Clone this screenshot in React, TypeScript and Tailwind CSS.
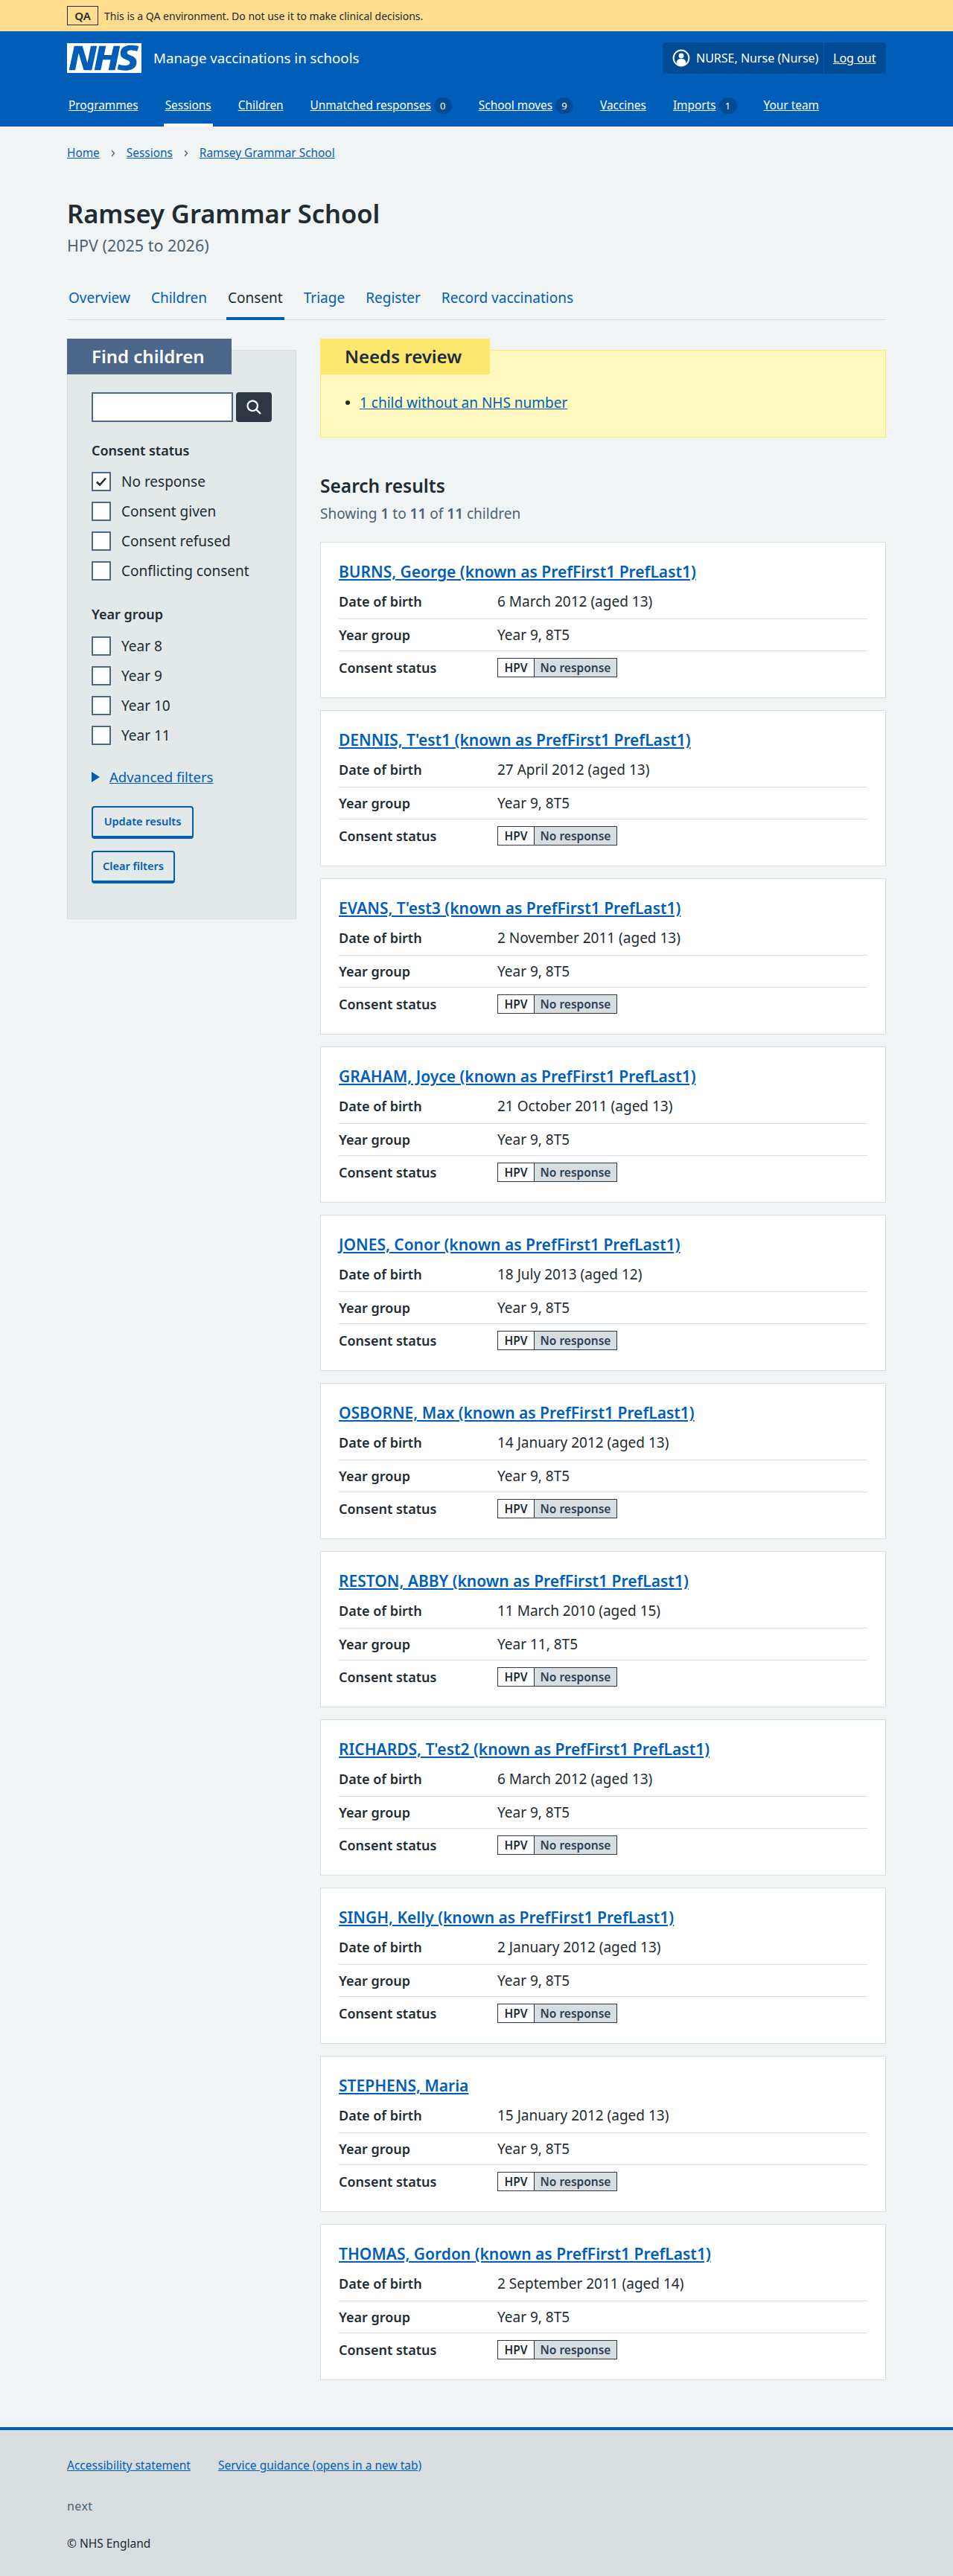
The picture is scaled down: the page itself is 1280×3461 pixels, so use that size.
const navItems: { label: string; count?: number; active?: boolean }[] = [
  { label: "Programmes" },
  { label: "Sessions", active: true },
  { label: "Children" },
  { label: "Unmatched responses", count: 0 },
  { label: "School moves", count: 9 },
  { label: "Vaccines" },
  { label: "Imports", count: 1 },
  { label: "Your team" },
];

const tabs = ["Overview", "Children", "Consent", "Triage", "Register", "Record vaccinations"];

const children = [
  { name: "BURNS, George (known as PrefFirst1 PrefLast1)", dob: "6 March 2012 (aged 13)", year: "Year 9, 8T5" },
  { name: "DENNIS, T'est1 (known as PrefFirst1 PrefLast1)", dob: "27 April 2012 (aged 13)", year: "Year 9, 8T5" },
  { name: "EVANS, T'est3 (known as PrefFirst1 PrefLast1)", dob: "2 November 2011 (aged 13)", year: "Year 9, 8T5" },
  { name: "GRAHAM, Joyce (known as PrefFirst1 PrefLast1)", dob: "21 October 2011 (aged 13)", year: "Year 9, 8T5" },
  { name: "JONES, Conor (known as PrefFirst1 PrefLast1)", dob: "18 July 2013 (aged 12)", year: "Year 9, 8T5" },
  { name: "OSBORNE, Max (known as PrefFirst1 PrefLast1)", dob: "14 January 2012 (aged 13)", year: "Year 9, 8T5" },
  { name: "RESTON, ABBY (known as PrefFirst1 PrefLast1)", dob: "11 March 2010 (aged 15)", year: "Year 11, 8T5" },
  { name: "RICHARDS, T'est2 (known as PrefFirst1 PrefLast1)", dob: "6 March 2012 (aged 13)", year: "Year 9, 8T5" },
  { name: "SINGH, Kelly (known as PrefFirst1 PrefLast1)", dob: "2 January 2012 (aged 13)", year: "Year 9, 8T5" },
  { name: "STEPHENS, Maria", dob: "15 January 2012 (aged 13)", year: "Year 9, 8T5" },
  { name: "THOMAS, Gordon (known as PrefFirst1 PrefLast1)", dob: "2 September 2011 (aged 14)", year: "Year 9, 8T5" },
];

function Checkbox({ label, checked }: { label: string; checked?: boolean }) {
  return (
    <div className="flex h-[26px] items-center">
      <span className="flex size-[26px] items-center justify-center border-2 border-[#4c6789] bg-white">
        {checked && (
          <svg viewBox="0 0 14 12" className="h-[12px] w-[14px]" fill="none" stroke="#212b32" strokeWidth="2.6">
            <path d="M1 6.5 5 10.500 13 1.500" />
          </svg>
        )}
      </span>
      <span className="ml-[14px] text-[19px] leading-[24px] text-[#212b32]">{label}</span>
    </div>
  );
}

function Chevron() {
  return (
    <svg viewBox="0 0 8 12" className="mx-[15px] h-[10px] w-[6px]" fill="none" stroke="#4c6272" strokeWidth="1.8">
      <path d="M1.5 1 6 6l-4.5 5" />
    </svg>
  );
}

function ChildCard({ name, dob, year }: { name: string; dob: string; year: string }) {
  return (
    <div className="h-[210px] border border-[#d8dde0] bg-white px-[24px] pt-[23px]">
      <a className="block text-[21px] leading-[32px] font-semibold text-[#005eb8] underline">{name}</a>
      <div className="flex border-b border-[#d8dde0] pt-[12px] pb-[11px] leading-[24px] text-[#212b32]">
        <div className="w-[213px] text-[18px] font-semibold">Date of birth</div>
        <div className="text-[19px]">{dob}</div>
      </div>
      <div className="flex border-b border-[#d8dde0] pt-[9px] pb-[9px] leading-[24px] text-[#212b32]">
        <div className="w-[213px] text-[18px] font-semibold">Year group</div>
        <div className="text-[19px]">{year}</div>
      </div>
      <div className="flex items-center pt-[9px] leading-[24px] text-[#212b32]">
        <div className="w-[213px] text-[18px] font-semibold">Consent status</div>
        <div className="flex h-[26px] border border-[#2f3744] text-[15.5px] font-semibold">
          <span className="flex w-[48px] items-center justify-center bg-white">HPV</span>
          <span className="flex w-[111px] items-center justify-center border-l border-[#2f3744] bg-[#d8dde0] text-[#2b3f54]">
            No response
          </span>
        </div>
      </div>
    </div>
  );
}

export default function App() {
  return (
    <div className="min-h-[3461px] bg-[#f0f4f5] font-['Noto_Sans','Liberation_Sans',sans-serif] text-[#212b32]">
      <div className="flex h-[42px] items-center bg-[#ffdc8e] pl-[90px]">
        <span className="flex h-[26px] w-[42px] items-center justify-center border border-[#212b32] text-[15px] font-semibold">
          QA
        </span>
        <span className="ml-[8px] text-[14px]">This is a QA environment. Do not use it to make clinical decisions.</span>
      </div>

      <header className="h-[128px] bg-[#005eb8] text-white">
        <div className="mx-auto flex w-[1100px] items-center justify-between pt-[15px]">
          <div className="flex items-center">
            <svg viewBox="0 0 40 16" className="h-[40px] w-[100px]">
              <path fill="#fff" d="M0 0h40v16H0z" />
              <path
                fill="#005eb8"
                d="M3.9 1.5h4.4l2.6 9h.1l1.8-9h3.3l-2.8 13H9l-2.7-9h-.1l-1.8 9H1.1M17.3 1.5h3.6l-1 4.9h4L25 1.5h3.5l-2.7 13h-3.5l1.1-5.6h-4.1l-1.2 5.6h-3.4M37.7 4.4c-.7-.3-1.6-.6-2.9-.6-1.4 0-2.5.2-2.5 1.3 0 1.8 5.1 1.2 5.1 5.1 0 3.6-3.3 4.5-6.4 4.5-1.3 0-2.9-.3-4-.7l.8-2.7c.7.4 2.1.7 3.2.7s2.8-.2 2.8-1.5c0-2.1-5.1-1.3-5.1-5 0-3.4 2.9-4.4 5.8-4.4 1.6 0 3.1.2 4 .6"
              />
            </svg>
            <span className="ml-[16px] text-[18.7px] leading-[28px]">Manage vaccinations in schools</span>
          </div>
          <div className="flex h-[42px] w-[300px] items-center rounded-[4px] bg-[#004b93] text-[16px]">
            <svg viewBox="0 0 24 24" className="ml-[13px] size-[24px]">
              <circle cx="12" cy="12" r="10.4" fill="none" stroke="#fff" strokeWidth="2" />
              <circle cx="12" cy="9" r="3.4" fill="#fff" />
              <path fill="#fff" d="M5.5 18.5c.4-3.6 2.6-5.4 6.5-5.4s6.1 1.8 6.5 5.400C16.800 20.900 14.600 22 12 22s-4.800-1.100-6.500-3.500z" />
            </svg>
            <span className="ml-[8px] w-[171px] whitespace-nowrap">NURSE, Nurse (Nurse)</span>
            <span className="h-[42px] w-px bg-[#005eb8]" />
            <a className="ml-[12px] underline">Log out</a>
          </div>
        </div>
        <nav className="mx-auto mt-[31px] flex h-[40px] w-[1100px] gap-[32px] text-[15.4px] leading-[24px]">
          {navItems.map((item) => (
            <div
              key={item.label}
              className={`flex h-[40px] items-start border-b-4 px-[2px] ${item.active ? "border-white" : "border-transparent"}`}
            >
              <a className="underline">{item.label}</a>
              {item.count !== undefined && (
                <span className="mt-[1px] ml-[4px] flex h-[22px] w-[24px] items-center justify-center rounded-full bg-[#004b93] text-[13px]">
                  {item.count}
                </span>
              )}
            </div>
          ))}
        </nav>
      </header>

      <main className="mx-auto w-[1100px] pt-[24px] pb-[63px]">
        <nav className="flex items-center text-[15.4px] leading-[24px] text-[#005eb8]">
          <a className="underline">Home</a>
          <Chevron />
          <a className="underline">Sessions</a>
          <Chevron />
          <a className="underline">Ramsey Grammar School</a>
        </nav>

        <h1 className="mt-[47px] text-[34.5px] leading-[44px] font-semibold">Ramsey Grammar School</h1>
        <p className="mt-[7px] text-[21.5px] leading-[28px] text-[#4c6272]">HPV (2025 to 2026)</p>

        <div className="mt-[42px] flex h-[44px] gap-[24px] border-b border-[#d8dde0] text-[19px] leading-[28px]">
          {tabs.map((tab) => (
            <div
              key={tab}
              className={`h-[44px] border-b-4 px-[2px] ${tab === "Consent" ? "border-[#005eb8] text-[#212b32]" : "border-transparent text-[#005eb8]"}`}
            >
              {tab}
            </div>
          ))}
        </div>

        <div className="mt-[25px] flex gap-[32px]">
          <aside className="w-[308px] shrink-0 pt-[15px]">
            <div className="h-[765px] border border-[#d8dde0] bg-[#e3e8e9]">
              <div className="-mx-px -mt-[16px] flex h-[48px] w-[221px] items-center bg-[#4c6789] pl-[33px] text-[24px] font-semibold text-white">
                Find children
              </div>
              <div className="px-[32px]">
                <div className="mt-[24px] flex gap-[4px]">
                  <div className="h-[40px] w-[190px] border-2 border-[#4c6789] bg-white" />
                  <button className="flex h-[40px] w-[48px] items-center justify-center rounded-[4px] bg-[#2f3744]">
                    <svg viewBox="0 0 24 24" className="size-[27px]" fill="#fff">
                      <path d="M19.71 18.29l-4.11-4.1a7 7 0 1 0-1.41 1.41l4.1 4.11a1 1 0 0 0 1.42 0 1 1 0 0 0 0-1.42zM5 10a5 5 0 1 1 5 5 5 5 0 0 1-5-5z" />
                    </svg>
                  </button>
                </div>

                <div className="mt-[26px] text-[18px] leading-[24px] font-semibold">Consent status</div>
                <div className="mt-[17px] flex flex-col gap-[14px]">
                  <Checkbox label="No response" checked />
                  <Checkbox label="Consent given" />
                  <Checkbox label="Consent refused" />
                  <Checkbox label="Conflicting consent" />
                </div>

                <div className="mt-[33px] text-[18px] leading-[24px] font-semibold">Year group</div>
                <div className="mt-[18px] flex flex-col gap-[14px]">
                  <Checkbox label="Year 8" />
                  <Checkbox label="Year 9" />
                  <Checkbox label="Year 10" />
                  <Checkbox label="Year 11" />
                </div>

                <div className="mt-[31px] flex items-center text-[18.5px] leading-[24px] text-[#005eb8]">
                  <svg viewBox="0 0 11 14" className="h-[14px] w-[11px]" fill="#005eb8">
                    <path d="M0 0l11 7-11 7z" />
                  </svg>
                  <a className="ml-[13px] underline">Advanced filters</a>
                </div>

                <button className="mt-[27px] flex h-[44px] w-[137px] items-center justify-center rounded-[4px] border-2 border-b-4 border-[#005eb8] text-[14.5px] font-semibold text-[#005eb8]">
                  Update results
                </button>
                <button className="mt-[16px] flex h-[44px] w-[112px] items-center justify-center rounded-[4px] border-2 border-b-4 border-[#005eb8] text-[14.5px] font-semibold text-[#005eb8]">
                  Clear filters
                </button>
              </div>
            </div>
          </aside>

          <section className="w-[760px] pt-[15px]">
            <div className="h-[118px] border border-[#ffeb6b] bg-[#fff9bf]">
              <div className="-mx-px -mt-[16px] flex h-[48px] w-[228px] items-center bg-[#fce86f] pl-[33px] text-[24px] font-semibold">
                Needs review
              </div>
              <div className="mt-[26px] flex items-center pl-[33px] text-[19px] leading-[24px]">
                <span className="size-[6px] rounded-full bg-[#212b32]" />
                <a className="ml-[13px] text-[#005eb8] underline">1 child without an NHS number</a>
              </div>
            </div>

            <h2 className="mt-[49px] text-[24.5px] leading-[32px] font-semibold">Search results</h2>
            <p className="mt-[9px] text-[19px] leading-[24px] text-[#4c6272]">
              Showing <b className="font-semibold">1</b> to <b className="font-semibold">11</b> of{" "}
              <b className="font-semibold">11</b> children
            </p>

            <div className="mt-[26px] flex flex-col gap-[16px]">
              {children.map((c) => (
                <ChildCard key={c.name} {...c} />
              ))}
            </div>
          </section>
        </div>
      </main>

      <footer className="h-[200px] border-t-4 border-[#005eb8] bg-[#d8dde0] pl-[90px] pt-[35px] text-[15.5px] leading-[24px]">
        <div className="flex gap-[37px] text-[#005eb8]">
          <a className="underline">Accessibility statement</a>
          <a className="underline">Service guidance (opens in a new tab)</a>
        </div>
        <div className="mt-[31px] text-[16px] tracking-wide text-[#4c6272]">next</div>
        <div className="mt-[26px]">© NHS England</div>
      </footer>
    </div>
  );
}
